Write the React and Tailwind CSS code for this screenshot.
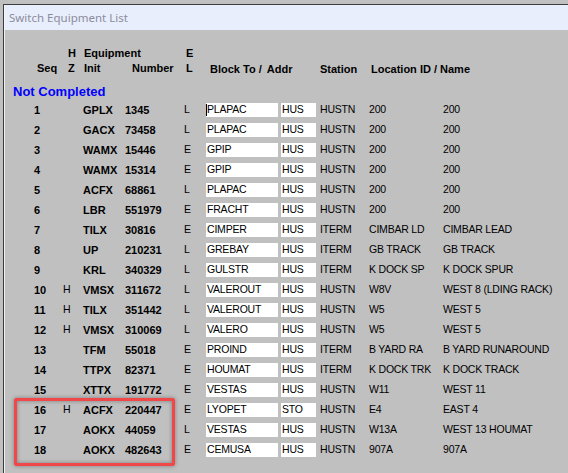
import React from "react";

const rows = [
  ["1", "", "GPLX", "1345", "L", "PLAPAC", "HUS", "HUSTN", "200", "200"],
  ["2", "", "GACX", "73458", "L", "PLAPAC", "HUS", "HUSTN", "200", "200"],
  ["3", "", "WAMX", "15446", "E", "GPIP", "HUS", "HUSTN", "200", "200"],
  ["4", "", "WAMX", "15314", "E", "GPIP", "HUS", "HUSTN", "200", "200"],
  ["5", "", "ACFX", "68861", "L", "PLAPAC", "HUS", "HUSTN", "200", "200"],
  ["6", "", "LBR", "551979", "E", "FRACHT", "HUS", "HUSTN", "200", "200"],
  ["7", "", "TILX", "30816", "E", "CIMPER", "HUS", "ITERM", "CIMBAR LD", "CIMBAR LEAD"],
  ["8", "", "UP", "210231", "L", "GREBAY", "HUS", "ITERM", "GB TRACK", "GB TRACK"],
  ["9", "", "KRL", "340329", "L", "GULSTR", "HUS", "ITERM", "K DOCK SP", "K DOCK SPUR"],
  ["10", "H", "VMSX", "311672", "L", "VALEROUT", "HUS", "HUSTN", "W8V", "WEST 8 (LDING RACK)"],
  ["11", "H", "TILX", "351442", "L", "VALEROUT", "HUS", "HUSTN", "W5", "WEST 5"],
  ["12", "H", "VMSX", "310069", "L", "VALERO", "HUS", "HUSTN", "W5", "WEST 5"],
  ["13", "", "TFM", "55018", "E", "PROIND", "HUS", "ITERM", "B YARD RA", "B YARD RUNAROUND"],
  ["14", "", "TTPX", "82371", "E", "HOUMAT", "HUS", "ITERM", "K DOCK TRK", "K DOCK TRACK"],
  ["15", "", "XTTX", "191772", "E", "VESTAS", "HUS", "HUSTN", "W11", "WEST 11"],
  ["16", "H", "ACFX", "220447", "E", "LYOPET", "STO", "HUSTN", "E4", "EAST 4"],
  ["17", "", "AOKX", "44059", "L", "VESTAS", "HUS", "HUSTN", "W13A", "WEST 13 HOUMAT"],
  ["18", "", "AOKX", "482643", "E", "CEMUSA", "HUS", "HUSTN", "907A", "907A"],
];

const reg = "text-[10.5px] tracking-[-0.2px]";

function Row({ r, first }) {
  const [seq, h, init, num, el, block, addr, station, loc, name] = r;
  return (
    <div className="flex h-[20px] items-center whitespace-nowrap text-black">
      <div className="w-[29px] shrink-0" />
      <div className="w-[29px] shrink-0 text-[11px] font-bold">{seq}</div>
      <div className={`w-[20px] shrink-0 ${reg}`}>{h}</div>
      <div className="w-[42px] shrink-0 text-[11px] font-bold">{init}</div>
      <div className="w-[59px] shrink-0 text-[11px] font-bold">{num}</div>
      <div className={`w-[22px] shrink-0 ${reg}`}>{el}</div>
      <div className={`relative flex h-[14px] w-[72px] shrink-0 items-center bg-white pl-[1px] ${reg}`}>
        {first && <span className="absolute left-0 top-[1px] h-[12px] w-[1px] bg-black" />}
        {block}
      </div>
      <div className="w-[3px] shrink-0" />
      <div className={`flex h-[14px] w-[35px] shrink-0 items-center bg-white pl-[1px] ${reg}`}>{addr}</div>
      <div className="w-[4px] shrink-0" />
      <div className={`w-[49px] shrink-0 ${reg}`}>{station}</div>
      <div className={`w-[74px] shrink-0 ${reg}`}>{loc}</div>
      <div className={`${reg}`}>{name}</div>
    </div>
  );
}

export default function App() {
  return (
    <div
      className="relative h-[473px] w-[568px] overflow-hidden bg-[#c0c0c0] pl-[3px] pt-[4px]"
      style={{ fontFamily: '"Liberation Sans", Arial, sans-serif' }}
    >
      <div className="h-full border-l border-t border-[#3c3c3c]">
        <div className="flex h-[25px] items-center border-l border-[#f4f6fc] bg-[#e8eefc] pl-[4px]">
          <span
            className="text-[11.5px] text-[#8c8c9c]"
            style={{ fontFamily: '"Noto Sans", "Open Sans", sans-serif' }}
          >
            Switch Equipment List
          </span>
        </div>
        <div className="h-full border-l border-[#f0f0f0] pt-[16px]">
          {/* header */}
          <div className="text-[11px] font-bold leading-[15px] text-black whitespace-nowrap">
            <div className="flex">
              <div className="w-[58px] shrink-0" />
              <div className="w-[20px] shrink-0 pl-[5px]">H</div>
              <div className="w-[101px] shrink-0 pl-[1px]">Equipment</div>
              <div className="w-[22px] shrink-0 pl-[2px]">E</div>
            </div>
            <div className="flex">
              <div className="w-[29px] shrink-0" />
              <div className="w-[29px] shrink-0 pl-[3px]">Seq</div>
              <div className="w-[20px] shrink-0 pl-[5px]">Z</div>
              <div className="w-[42px] shrink-0 pl-[1px]">Init</div>
              <div className="w-[59px] shrink-0 pl-[7px]">Number</div>
              <div className="w-[22px] shrink-0 pl-[2px]">L</div>
              <div className="w-[114px] shrink-0 pl-[4px] pt-[1px]">
                Block To /<span className="ml-[5px]">Addr</span>
              </div>
              <div className="w-[49px] shrink-0 pt-[1px]">Station</div>
              <div className="shrink-0 pl-[2px] pt-[1px]">Location ID / Name</div>
            </div>
          </div>
          <div className="mt-[7px] pl-[8px] text-[13px] font-bold leading-[16px] text-[#0000ff]">
            Not Completed
          </div>
          {rows.map((r, i) => (
            <Row key={i} r={r} first={i === 0} />
          ))}
        </div>
      </div>
      <div className="absolute left-[14px] top-[398px] h-[68px] w-[161px] rounded-[2px] border-[3px] border-[#f04848] shadow-[0_0_4px_rgba(0,0,0,0.35),inset_0_0_4px_rgba(0,0,0,0.35)]" />
    </div>
  );
}
